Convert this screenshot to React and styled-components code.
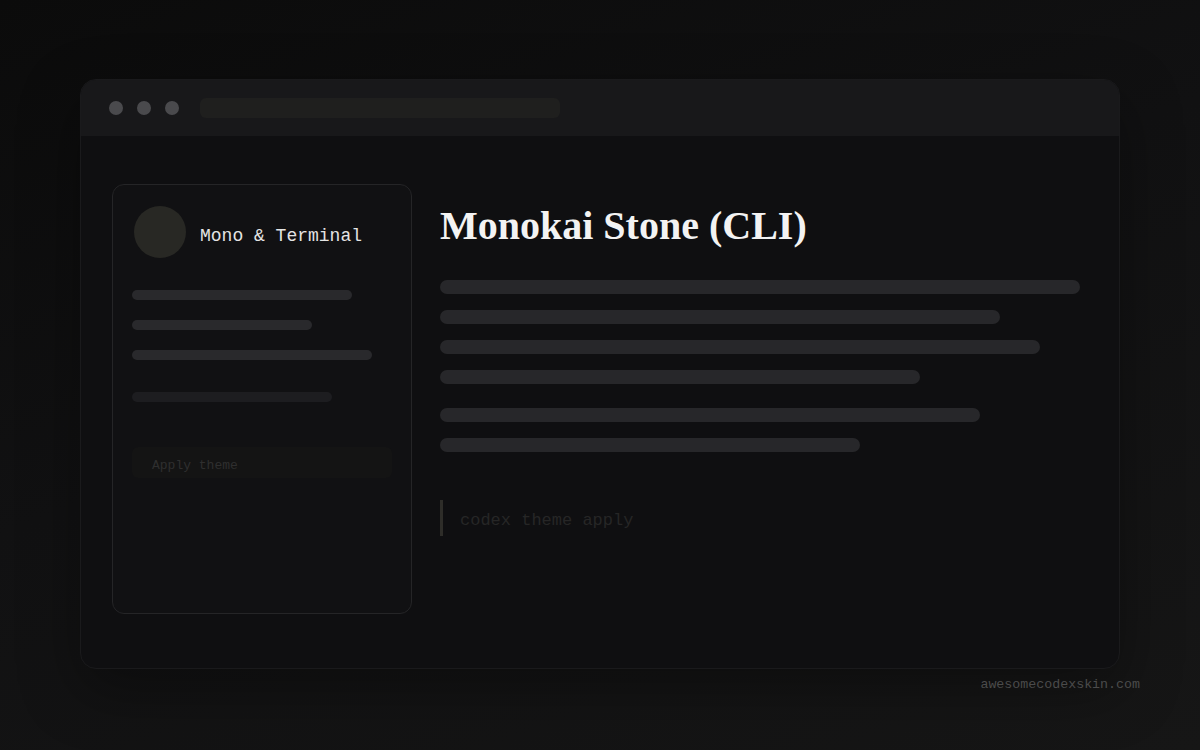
import styled, { createGlobalStyle } from 'styled-components';

const GlobalStyle = createGlobalStyle`
  html, body {
    margin: 0;
    padding: 0;
    width: 1200px;
    height: 750px;
    overflow: hidden;
  }
  body {
    background: linear-gradient(160deg, #0b0b0b 0%, #111112 45%, #161616 100%);
    font-family: "Liberation Mono", "DejaVu Sans Mono", monospace;
  }
`;

const Page = styled.div`
  padding: 79px 0 0 80px;
  width: 1200px;
  height: 750px;
  box-sizing: border-box;
`;

const Window = styled.div`
  width: 1040px;
  height: 590px;
  box-sizing: border-box;
  border-radius: 16px;
  background: #0f0f11;
  border: 1px solid #1a1a1c;
  overflow: hidden;
  display: flex;
  flex-direction: column;
  box-shadow: 0 20px 60px rgba(0, 0, 0, 0.35);
`;

const TitleBar = styled.div`
  height: 56px;
  flex: none;
  background: #18181a;
  display: flex;
  align-items: center;
  padding-left: 28px;
  gap: 14px;
`;

const Dot = styled.span`
  width: 14px;
  height: 14px;
  border-radius: 50%;
  background: #4a4a4d;
`;

const AddressBar = styled.div`
  margin-left: 7px;
  width: 360px;
  height: 20px;
  border-radius: 6px;
  background: #1f1f1e;
`;

const Body = styled.div`
  display: flex;
  align-items: flex-start;
  padding: 48px 0 0 31px;
  gap: 28px;
`;

const Sidebar = styled.aside`
  width: 300px;
  height: 430px;
  box-sizing: border-box;
  border: 1px solid #252527;
  border-radius: 12px;
  background: #111113;
  padding: 21px 19px 0 19px;
  display: flex;
  flex-direction: column;
`;

const Header = styled.div`
  display: flex;
  align-items: center;
  gap: 14px;
  padding-left: 2px;
`;

const Avatar = styled.div`
  width: 52px;
  height: 52px;
  border-radius: 50%;
  background: #282824;
`;

const Category = styled.div`
  font-family: "Liberation Mono", "DejaVu Sans Mono", monospace;
  font-size: 18px;
  color: #e4e4e4;
  padding-top: 7px;
`;

const SideLines = styled.div`
  display: flex;
  flex-direction: column;
  gap: 20px;
  margin-top: 32px;
`;

const SideLine = styled.div`
  height: 10px;
  border-radius: 5px;
  width: ${(p) => p.$w}px;
  background: ${(p) => (p.$dim ? '#1d1d20' : '#29292c')};
  margin-top: ${(p) => (p.$gap ? '12px' : '0')};
`;

const ApplyButton = styled.div`
  margin-top: 45px;
  width: 260px;
  height: 31px;
  box-sizing: border-box;
  border-radius: 6px;
  background: #141414;
  padding: 5px 0 0 20px;
  display: flex;
  align-items: center;
  font-size: 13px;
  color: #2f2f2f;
`;

const Main = styled.main`
  padding-top: 20px;
  display: flex;
  flex-direction: column;
`;

const Title = styled.h1`
  margin: 0;
  font-family: "Liberation Serif", "Times New Roman", serif;
  font-weight: 700;
  font-size: 40px;
  line-height: 44px;
  color: #f3f3f3;
`;

const Lines = styled.div`
  margin-top: 32px;
  display: flex;
  flex-direction: column;
  gap: 16px;
`;

const Line = styled.div`
  height: 14px;
  border-radius: 7px;
  width: ${(p) => p.$w}px;
  background: #27272a;
  margin-top: ${(p) => (p.$gap ? '8px' : '0')};
`;

const Command = styled.div`
  margin-top: 48px;
  height: 36px;
  box-sizing: border-box;
  border-left: 3px solid #2e2d29;
  padding: 4px 0 0 17px;
  display: flex;
  align-items: center;
  font-size: 17px;
  color: #262626;
`;

const Footer = styled.div`
  width: 1060px;
  text-align: right;
  margin-top: 8px;
  font-size: 13.3px;
  color: #4b4b4b;
`;

const sideLines = [
  { w: 220 },
  { w: 180 },
  { w: 240 },
  { w: 200, dim: true, gap: true },
];

const mainLines = [
  { w: 640 },
  { w: 560 },
  { w: 600 },
  { w: 480 },
  { w: 540, gap: true },
  { w: 420 },
];

export default function App() {
  return (
    <>
      <GlobalStyle />
      <Page>
        <Window>
          <TitleBar>
            <Dot />
            <Dot />
            <Dot />
            <AddressBar />
          </TitleBar>
          <Body>
            <Sidebar>
              <Header>
                <Avatar />
                <Category>Mono &amp; Terminal</Category>
              </Header>
              <SideLines>
                {sideLines.map((l, i) => (
                  <SideLine key={i} $w={l.w} $dim={l.dim} $gap={l.gap} />
                ))}
              </SideLines>
              <ApplyButton>Apply theme</ApplyButton>
            </Sidebar>
            <Main>
              <Title>Monokai Stone (CLI)</Title>
              <Lines>
                {mainLines.map((l, i) => (
                  <Line key={i} $w={l.w} $gap={l.gap} />
                ))}
              </Lines>
              <Command>codex theme apply</Command>
            </Main>
          </Body>
        </Window>
        <Footer>awesomecodexskin.com</Footer>
      </Page>
    </>
  );
}
